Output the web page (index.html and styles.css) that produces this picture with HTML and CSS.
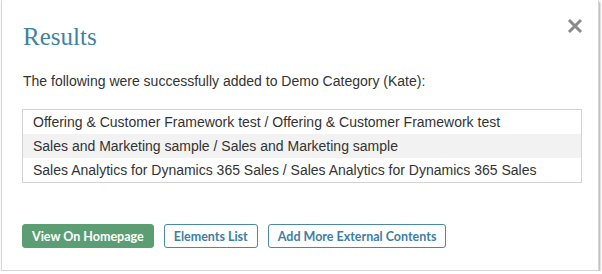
FILE: index.html
```html
<!DOCTYPE html>
<html lang="en">
<head>
    <meta charset="UTF-8">
    <title>Results</title>
    <link rel="stylesheet" href="styles.css">
</head>
<body>
    <div class="modal">
        <div class="modal-header">
            <h2 class="modal-title">Results</h2>
            <button class="close-btn" aria-label="Close">
                <svg width="16" height="16" viewBox="0 0 16 16">
                    <path d="M2 2 L14 14 M14 2 L2 14" stroke="#8a8a8a" stroke-width="3" stroke-linecap="butt"/>
                </svg>
            </button>
        </div>

        <p class="intro">The following were successfully added to Demo Category (Kate):</p>

        <ul class="result-list">
            <li>Offering &amp; Customer Framework test / Offering &amp; Customer Framework test</li>
            <li>Sales and Marketing sample / Sales and Marketing sample</li>
            <li>Sales Analytics for Dynamics 365 Sales / Sales Analytics for Dynamics 365 Sales</li>
        </ul>

        <div class="actions">
            <button class="btn btn-primary">View On Homepage</button>
            <button class="btn btn-outline">Elements List</button>
            <button class="btn btn-outline">Add More External Contents</button>
        </div>
    </div>
</body>
</html>
```

FILE: styles.css
```css
body {
    margin: 0;
    padding: 0;
    background: #ffffff;
    font-family: 'Liberation Sans', Arial, sans-serif;
    color: #333;
}

.modal {
    box-sizing: border-box;
    width: 598px;
    height: 271px;
    margin-left: 1px;
    padding: 0 15px 0 20px;
    background: #fff;
    border: 1px solid #d6d6d6;
    border-top: none;
    box-shadow: 1px 2px 2px rgba(0, 0, 0, 0.35);
}

.modal-header {
    display: flex;
    justify-content: space-between;
    align-items: flex-start;
    padding-top: 22px;
}

.modal-title {
    margin: 0 0 0 1px;
    font-family: 'Liberation Serif', 'Times New Roman', serif;
    font-weight: normal;
    font-size: 25px;
    line-height: 30px;
    color: #3f82a3;
}

.close-btn {
    border: none;
    background: none;
    padding: 0;
    margin: -4px 0 0 0;
    width: 16px;
    height: 16px;
    cursor: pointer;
}

.intro {
    margin: 20px 0 0 1px;
    font-size: 14px;
    line-height: 18px;
}

.result-list {
    list-style: none;
    margin: 19px 1px 0 0;
    padding: 0;
    border: 1px solid #d3d3d3;
}

.result-list li {
    padding: 0 10px;
    height: 24px;
    line-height: 24px;
    font-size: 14px;
    color: #333;
}

.result-list li:nth-child(even) {
    background-color: #f2f2f2;
}

.actions {
    display: flex;
    gap: 10px;
    margin-top: 41px;
}

.btn {
    box-sizing: border-box;
    height: 24px;
    padding: 0 9px;
    border-radius: 3px;
    font-family: Lato, sans-serif;
    font-weight: bold;
    font-size: 12.5px;
    cursor: pointer;
}

.btn-primary {
    background-color: #5b9e74;
    border: 1px solid #5b9e74;
    color: #fff;
}

.btn-outline {
    background-color: #fff;
    border: 1px solid #4a88aa;
    color: #3f7ea0;
}
```
